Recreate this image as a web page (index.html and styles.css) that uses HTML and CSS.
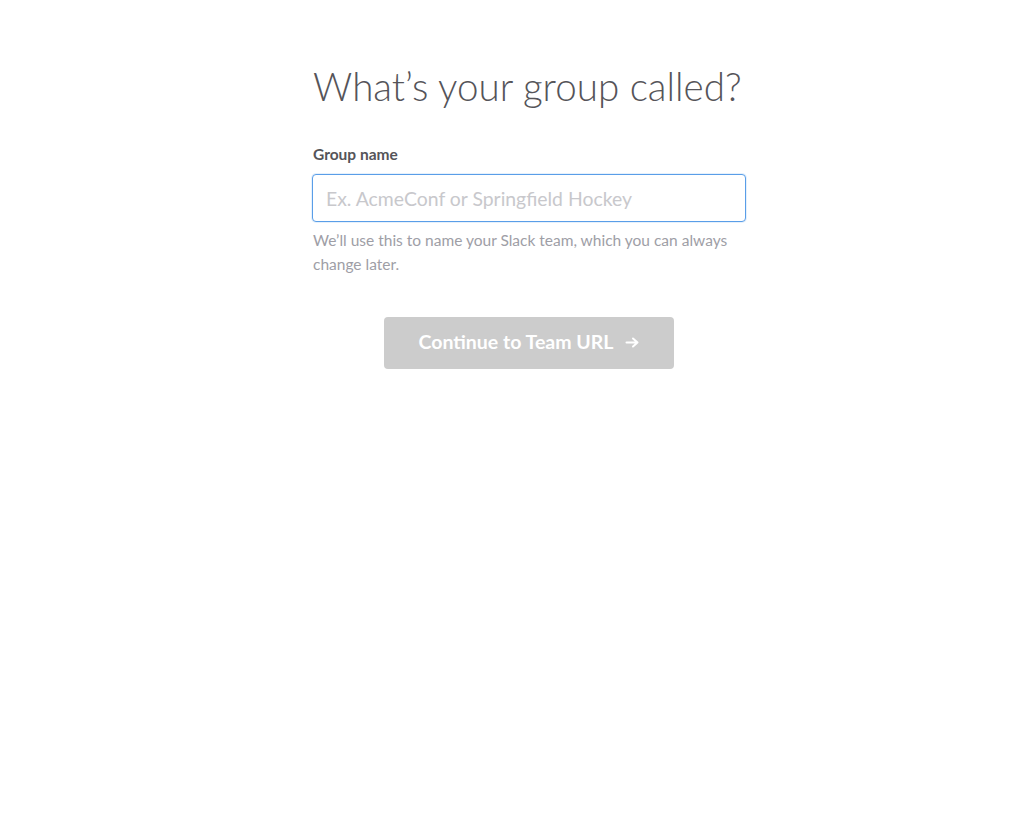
FILE: index.html
```html
<!DOCTYPE html>
<html lang="en">
<head>
  <meta charset="UTF-8" />
  <title>What's your group called?</title>
  <link rel="stylesheet" href="styles.css">
</head>
<body>
  <div class="page">
    <form class="signup-step">
      <h1 class="step-title">What’s your group called?</h1>
      <label class="field-label" for="groupName">Group name</label>
      <input id="groupName" class="field-input" type="text" placeholder="Ex. AcmeConf or Springfield Hockey" />
      <p class="field-hint">We’ll use this to name your Slack team, which you can always change later.</p>
      <div class="actions">
        <button class="continue-btn" type="button" disabled>
          <span>Continue to Team URL</span>
          <svg class="arrow" width="14" height="11" viewBox="0 0 14 11" fill="none" stroke="#fff" stroke-width="2" stroke-linecap="round" stroke-linejoin="round">
            <path d="M1.5 5.5h11M8 1.5l4.5 4-4.5 4" />
          </svg>
        </button>
      </div>
    </form>
  </div>
</body>
</html>
```

FILE: styles.css
```css
* {
  box-sizing: border-box;
}

body {
  margin: 0;
  font-family: Lato, 'Liberation Sans', sans-serif;
  background: #fff;
  color: #555459;
}

.page {
  display: flex;
  justify-content: center;
  padding: 62px 0 0 34px;
}

.signup-step {
  width: 434px;
  display: flex;
  flex-direction: column;
}

.step-title {
  margin: 0 0 34px 1px;
  font-size: 38.6px;
  font-weight: 300;
  line-height: 48px;
  white-space: nowrap;
  color: #555459;
}

.field-label {
  font-size: 15.5px;
  font-weight: 700;
  margin: 0 0 10px 1px;
  line-height: 20px;
  color: #555459;
}

.field-input {
  height: 48px;
  padding: 0 13px;
  font-family: inherit;
  font-size: 19.4px;
  border: 1px solid #5a9ee8;
  border-radius: 4px;
  outline: none;
  box-shadow: 0 0 0 1px rgba(90, 158, 232, 0.15);
  color: #555459;
}

.field-input::placeholder {
  color: #c8c8cc;
}

.field-hint {
  margin: 6px 0 0 1px;
  font-size: 15.5px;
  line-height: 24px;
  color: #9e9ea6;
}

.actions {
  display: flex;
  justify-content: center;
  margin-top: 41px;
}

.continue-btn {
  width: 290px;
  height: 52px;
  display: flex;
  align-items: center;
  justify-content: center;
  gap: 12px;
  padding: 0 0 3px 0;
  border: none;
  border-radius: 4px;
  background: #cccccc;
  color: #fff;
  font-family: inherit;
  font-size: 19.5px;
  font-weight: 700;
  cursor: default;
}

.continue-btn .arrow {
  margin-top: 2px;
}
```
